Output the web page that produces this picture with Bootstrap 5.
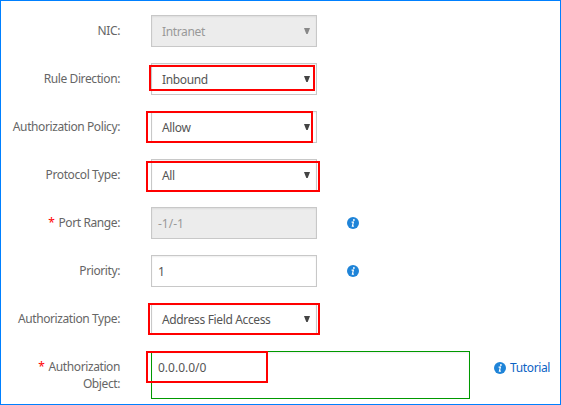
<!DOCTYPE html>
<html lang="en">
<head>
<meta charset="utf-8">
<title>Security group rule</title>
<link href="https://cdn.jsdelivr.net/npm/bootstrap@5.3.0/dist/css/bootstrap.min.css" rel="stylesheet">
<style>
body{font-family:"Noto Sans",sans-serif;font-size:12px;line-height:17px;color:#666;background:#fff}
.panel{width:561px;height:405px;border:1px solid #0080ff;padding:14px 0 0 0;overflow:hidden}
.rule-row{height:32px;margin-bottom:16px}
.rule-label{width:119px;padding-top:7px;letter-spacing:-.4px}
.field{width:166px;height:32px;margin-left:31px}
.box{height:32px;border:1px solid #c8c8c8;border-radius:0;background:#fff;box-shadow:inset 0 1px 2px rgba(0,0,0,.07);color:#555;padding:1px 6px 0 10px;letter-spacing:-.36px}
.box-input{padding-left:6px;letter-spacing:0}
.box-off{background:#ececec;color:#999}
.caret{width:6px;height:6px;display:block;fill:#444;margin-top:-2px}
.box-off .caret{fill:#888}
.wide{width:319px}
.box-area{height:48px;border-color:#090;padding-top:7px}
.mark-red{position:absolute;border:2px solid #f00}
.m1{left:-2px;top:2px;width:166px;height:26px}
.m2{left:-5px;top:0;width:167px;height:32px}
.m3{left:-5px;top:2px;width:174px;height:31px}
.m4{left:-3px;top:0;width:172px;height:32px}
.m5{left:-5px;top:0;width:122px;height:32px}
.star{color:#f00;margin-right:4px}
.info{width:12px;height:12px;display:block}
.info-gap{margin:10px 0 0 30px}
.help{margin:8px 0 0 24px;color:#0b62c4;text-decoration:none;gap:4px;height:17px;letter-spacing:-.36px}
</style>
<script src="https://cdn.jsdelivr.net/npm/bootstrap@5.3.0/dist/js/bootstrap.bundle.min.js"></script>
</head>
<body>
<svg class="d-none">
<symbol id="info" viewBox="0 0 12 12"><circle cx="6" cy="6" r="6" fill="#1f84d8"/><circle cx="6.9" cy="3" r=".9" fill="#fff"/><path d="M4.6 5.1h1.8L5.4 9.1h1.5" fill="none" stroke="#fff" stroke-width="1.15"/></symbol>
<symbol id="down" viewBox="0 0 6 6"><path d="M0 0h6L3.7 6H2.3z"/></symbol>
</svg>
<main class="panel">
<div class="rule-row d-flex"><div class="rule-label text-end">NIC:</div><div class="field"><div class="box box-off d-flex align-items-center justify-content-between"><span>Intranet</span><svg class="caret"><use href="#down"/></svg></div></div></div>
<div class="rule-row d-flex"><div class="rule-label text-end">Rule Direction:</div><div class="field position-relative"><div class="box d-flex align-items-center justify-content-between"><span>Inbound</span><svg class="caret"><use href="#down"/></svg></div><div class="mark-red m1"></div></div></div>
<div class="rule-row d-flex"><div class="rule-label text-end">Authorization Policy:</div><div class="field position-relative"><div class="box d-flex align-items-center justify-content-between"><span>Allow</span><svg class="caret"><use href="#down"/></svg></div><div class="mark-red m2"></div></div></div>
<div class="rule-row d-flex"><div class="rule-label text-end">Protocol Type:</div><div class="field position-relative"><div class="box d-flex align-items-center justify-content-between"><span>All</span><svg class="caret"><use href="#down"/></svg></div><div class="mark-red m3"></div></div></div>
<div class="rule-row d-flex"><div class="rule-label text-end"><span class="star">*</span>Port Range:</div><div class="field"><div class="box box-input box-off d-flex align-items-center">-1/-1</div></div><svg class="info info-gap"><use href="#info"/></svg></div>
<div class="rule-row d-flex"><div class="rule-label text-end">Priority:</div><div class="field"><div class="box box-input d-flex align-items-center">1</div></div><svg class="info info-gap"><use href="#info"/></svg></div>
<div class="rule-row d-flex"><div class="rule-label text-end">Authorization Type:</div><div class="field position-relative"><div class="box d-flex align-items-center justify-content-between"><span>Address Field Access</span><svg class="caret"><use href="#down"/></svg></div><div class="mark-red m4"></div></div></div>
<div class="rule-row d-flex"><div class="rule-label text-end"><span class="star">*</span>Authorization Object:</div><div class="field wide position-relative"><div class="box box-input box-area">0.0.0.0/0</div><div class="mark-red m5"></div></div><a href="#" class="help d-flex align-items-center"><svg class="info"><use href="#info"/></svg><span>Tutorial</span></a></div>
</main>
</body>
</html>
